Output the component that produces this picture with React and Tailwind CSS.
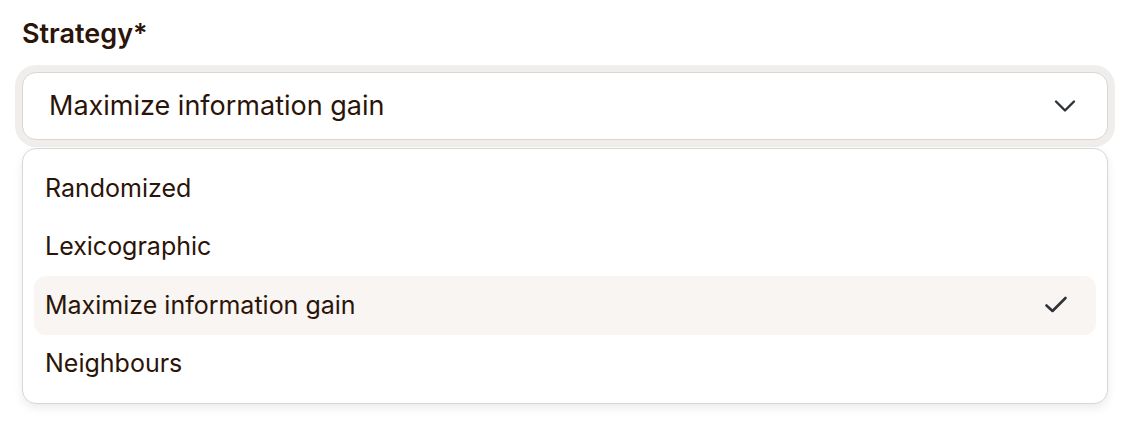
import React from "react";

function Chevron() {
  return (
    <svg width="24" height="24" viewBox="0 0 24 24" fill="none" stroke="#2f3338" strokeWidth="2.4" strokeLinecap="round" strokeLinejoin="round">
      <path d="M3 7.5 12 16.5 21 7.5" />
    </svg>
  );
}

function Check() {
  return (
    <svg width="24" height="24" viewBox="0 0 24 24" fill="none" stroke="#2f3338" strokeWidth="2.6" strokeLinecap="round" strokeLinejoin="round">
      <path d="M2.5 12.5 8.5 18 21.5 5" />
    </svg>
  );
}

const items = ["Randomized", "Lexicographic", "Maximize information gain", "Neighbours"];

export default function App() {
  return (
    <div className="bg-white w-[1134px] h-[444px] pl-[22px] pr-[26px] pt-[18px] text-[#2b1408]" style={{ fontFamily: "Inter, 'Noto Sans', sans-serif" }}>
      <div className="text-[27px] leading-[32px] font-semibold">Strategy*</div>
      <div className="mt-[22px] h-[68px] rounded-[14px] border border-[#dcd6d0] bg-white ring-[7px] ring-[#efeeed] flex items-center justify-between pl-[26px] pr-[30px]">
        <span className="text-[27px]">Maximize information gain</span>
        <Chevron />
      </div>
      <div className="mt-[8px] rounded-[14px] border border-[#dcd6d0] bg-white shadow-[0_4px_10px_rgba(0,0,0,0.08)] px-[11px] py-[10px]">
        {items.map((it) => (
          <div
            key={it}
            className={
              "h-[58.5px] rounded-[12px] flex items-center justify-between pl-[11px] pr-[28px] text-[25px] " +
              (it === "Maximize information gain" ? "bg-[#f8f5f2]" : "")
            }
          >
            <span>{it}</span>
            {it === "Maximize information gain" ? <Check /> : null}
          </div>
        ))}
      </div>
    </div>
  );
}
